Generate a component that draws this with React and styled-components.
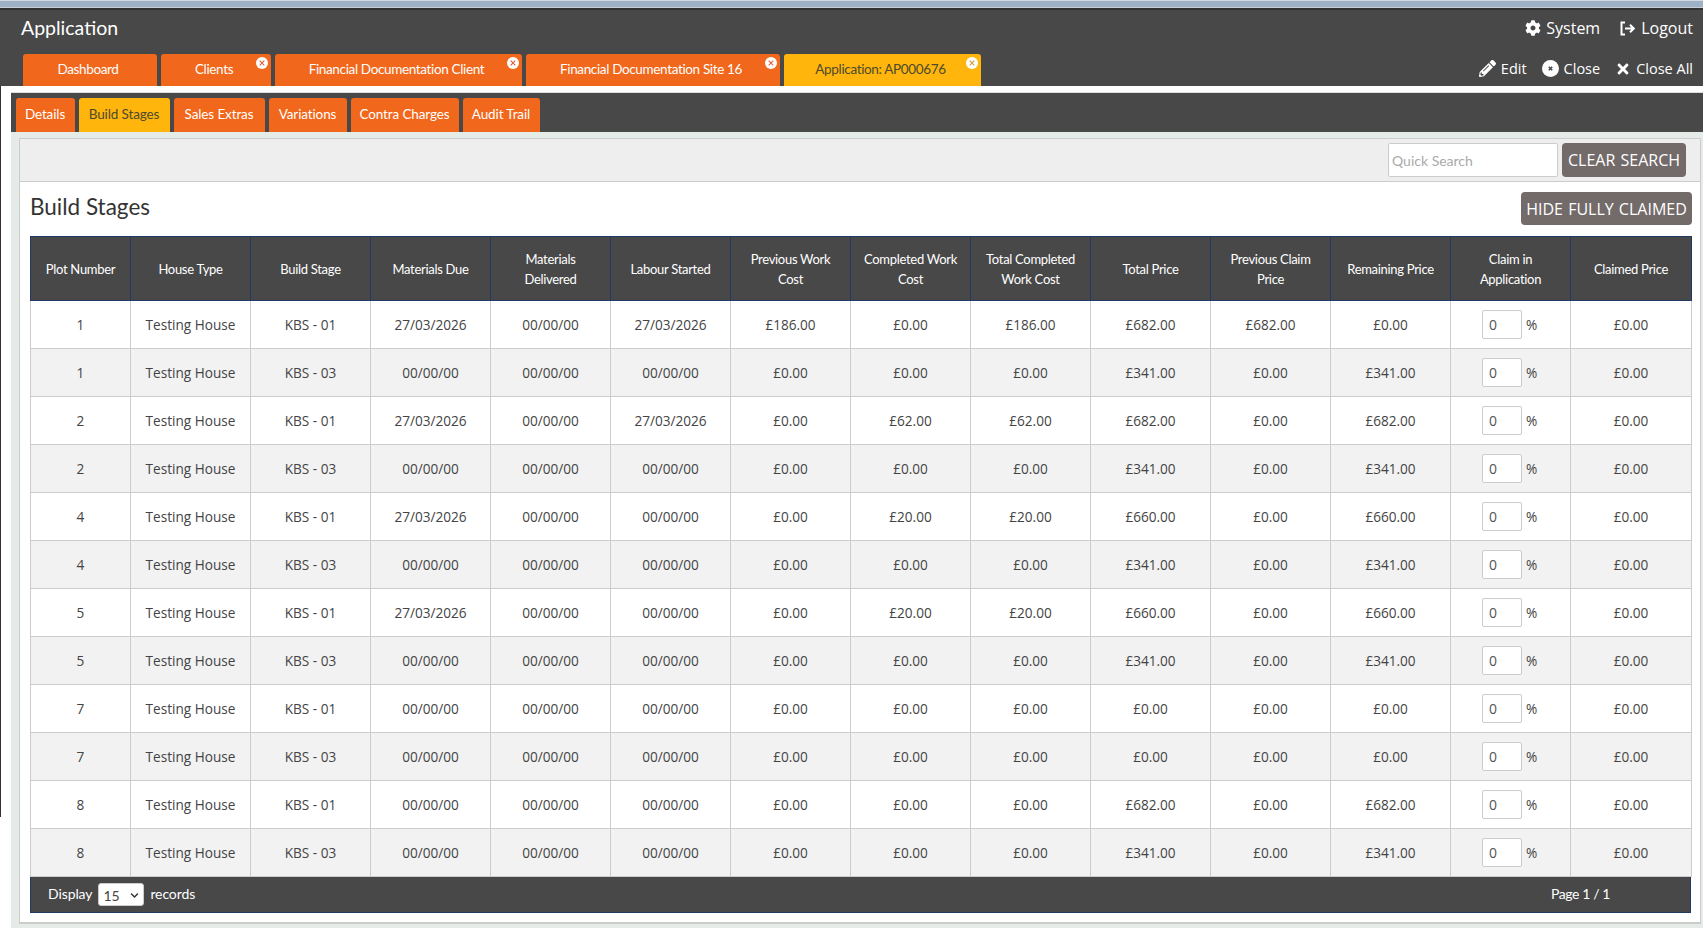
import React from 'react';
import styled, { createGlobalStyle } from 'styled-components';
import { FaCog, FaPencilAlt, FaTimes, FaChevronDown } from 'react-icons/fa';

const GlobalStyle = createGlobalStyle`
  html, body {
    margin: 0;
    padding: 0;
    background: #fff;
    overflow: hidden;
  }
  * {
    box-sizing: border-box;
  }
`;

const headFont = `Lato, "Open Sans", sans-serif`;
const bodyFont = `"Open Sans", "Noto Sans", sans-serif`;

const Page = styled.div`
  width: 1703px;
  height: 928px;
  overflow: hidden;
  background: linear-gradient(#333, #333) left top / 1px 817px no-repeat, #fff;
`;

const TopStrip = styled.div`
  height: 8px;
  background: #9db2c6;
  border-top: 1px solid #d5dade;
  border-bottom: 1px solid #c6ced6;
`;

const Header = styled.header`
  height: 78px;
  background: #484848;
  border-top: 2px solid #333;
  color: #fff;
  font-family: ${headFont};
  display: flex;
  flex-direction: column;
  justify-content: space-between;
`;

const HeaderTop = styled.div`
  display: flex;
  justify-content: space-between;
  align-items: center;
  padding: 6px 10px 0 21px;
`;

const AppTitle = styled.h1`
  margin: 0;
  font-size: 19.5px;
  font-weight: 400;
  line-height: 24px;
`;

const HeaderLinks = styled.div`
  display: flex;
  align-items: center;
  gap: 20px;
  font-family: ${bodyFont};
  font-size: 16px;
`;

const HeaderLink = styled.span`
  display: inline-flex;
  align-items: center;
  gap: 5px;
`;

const HeaderBottom = styled.div`
  display: flex;
  justify-content: space-between;
  align-items: flex-end;
  padding: 0 10px 0 23px;
`;

const MainTabs = styled.div`
  display: flex;
  gap: 4px;
`;

const MainTab = styled.div`
  position: relative;
  width: ${(p) => p.$width}px;
  height: 32px;
  padding: 0 4px 2px 0;
  display: flex;
  align-items: center;
  justify-content: center;
  font-size: 13.5px;
  letter-spacing: -0.35px;
  border-radius: 3px 3px 0 0;
  background: ${(p) => (p.$active ? '#ffb50b' : '#f1671b')};
  color: ${(p) => (p.$active ? '#4d4a2e' : '#fff')};
`;

const TabClose = styled.span`
  position: absolute;
  top: 3px;
  right: 3px;
  width: 12px;
  height: 12px;
  border-radius: 50%;
  background: #fff;
  display: flex;
  align-items: center;
  justify-content: center;
  color: ${(p) => (p.$active ? '#c9a040' : '#e0603a')};
`;

const ActionLinks = styled.div`
  display: flex;
  align-items: center;
  gap: 15px;
  padding-bottom: 8px;
  font-family: ${bodyFont};
  font-size: 14.5px;
`;

const Content = styled.div`
  padding: 6px 0 0 11px;
`;

const SubBar = styled.nav`
  height: 40px;
  background: #484848;
  border-top: 1px solid #ddd;
  display: flex;
  align-items: flex-end;
  gap: 4px;
  padding-left: 5px;
  font-family: ${headFont};
`;

const SubTab = styled.div`
  width: ${(p) => p.$width}px;
  height: 34px;
  padding: 0 1px 2px 0;
  display: flex;
  align-items: center;
  justify-content: center;
  font-size: 13.5px;
  letter-spacing: -0.12px;
  border-radius: 3px 3px 0 0;
  background: ${(p) => (p.$active ? '#ffb50b' : '#f1671b')};
  color: ${(p) => (p.$active ? '#4d4a2e' : '#fff')};
`;

const PanelWrap = styled.div`
  background: #e5ece7;
  padding: 6px 2px 4px 8px;
  height: 796px;
`;

const Panel = styled.section`
  background: #fff;
  border: 1px solid #ccc;
  border-bottom-width: 2px;
  height: 786px;
`;

const Toolbar = styled.div`
  height: 43px;
  background: #eee;
  border-bottom: 1px solid #ccc;
  display: flex;
  justify-content: flex-end;
  align-items: center;
  gap: 4px;
  padding-right: 14px;
`;

const SearchBox = styled.input`
  width: 170px;
  height: 34px;
  border: 1px solid #ccc;
  border-radius: 2px;
  background: #fff;
  padding: 0 3px;
  font-family: ${headFont};
  font-size: 14px;
  &::placeholder {
    color: #aaa;
  }
`;

const GreyButton = styled.button`
  height: ${(p) => p.$height}px;
  width: ${(p) => p.$width}px;
  border: 0;
  border-radius: 4px;
  padding: 0;
  background: #736a6a;
  color: #fff;
  font-family: ${bodyFont};
  font-size: 16px;
  word-spacing: 1px;
`;

const TitleRow = styled.div`
  height: 54px;
  display: flex;
  justify-content: space-between;
  align-items: flex-start;
  padding: 10px 8px 0 10px;
`;

const PageTitle = styled.h2`
  margin: 0;
  padding-top: 1px;
  font-family: ${headFont};
  font-size: 22.5px;
  font-weight: 400;
  line-height: 28px;
  color: #333;
`;

const TableWrap = styled.div`
  padding: 0 8px 0 10px;
`;

const Table = styled.table`
  width: 1661px;
  table-layout: fixed;
  border-collapse: collapse;
  border: 1px solid #1f3a63;
`;

const Th = styled.th`
  height: 64px;
  padding: 0 8px;
  background: #484848;
  border: 1px solid #1f3a63;
  color: #fff;
  font-family: ${headFont};
  font-size: 13px;
  font-weight: 400;
  letter-spacing: -0.3px;
  line-height: 20px;
  text-align: center;
`;

const Td = styled.td`
  height: 48px;
  padding: 0;
  border: 1px solid #ccc;
  color: #444;
  font-family: ${bodyFont};
  font-size: 13.6px;
  text-align: center;
`;

const Row = styled.tr`
  background: ${(p) => (p.$alt ? '#f2f2f2' : '#fff')};
`;

const ClaimCell = styled.div`
  display: flex;
  justify-content: center;
  align-items: center;
  gap: 4px;
  padding-right: 2px;
`;

const ClaimInput = styled.input`
  width: 40px;
  height: 29px;
  border: 1px solid #ccc;
  border-radius: 2px;
  background: #fff;
  padding: 0 6px;
  color: #555;
  font-family: ${bodyFont};
  font-size: 14px;
`;

const Footer = styled.div`
  width: 1661px;
  height: 36px;
  background: #484848;
  border: 1px solid #1f3a63;
  border-top: 0;
  color: #fff;
  font-family: ${headFont};
  font-size: 14px;
  letter-spacing: -0.1px;
  display: flex;
  justify-content: space-between;
  align-items: center;
  padding: 0 80px 3px 17px;
`;

const DisplayGroup = styled.div`
  display: flex;
  align-items: center;
  gap: 6px;
`;

const PageSelect = styled.div`
  position: relative;
  width: 46px;
  height: 23px;
  margin-top: 3px;
  background: #fff;
  border: 1px solid #ccc;
  border-radius: 3px;
  color: #444;
  font-size: 14px;
  padding: 3px 0 0 4px;
  svg {
    position: absolute;
    right: 4px;
    top: 7px;
    color: #333;
  }
`;

const PageInfo = styled.span`
  letter-spacing: -0.4px;
`;

const CloseCircle = () => (
  <svg width="17" height="17" viewBox="0 0 17 17">
    <circle cx="8.5" cy="8.5" r="8.5" fill="#fff" />
    <path d="M6.8 6.8l3.4 3.4M10.2 6.8l-3.4 3.4" stroke="#484848" strokeWidth="1.6" />
  </svg>
);

const SmallX = () => (
  <svg width="6" height="6" viewBox="0 0 6 6">
    <path d="M.7.7l4.6 4.6M5.3.7L.7 5.3" stroke="currentColor" strokeWidth="1.1" />
  </svg>
);

const LogoutIcon = () => (
  <svg width="16" height="15" viewBox="0 0 16 15" fill="none" stroke="#fff" strokeWidth="2">
    <path d="M5 1.5H1.5v12H5" />
    <path d="M5 7.5h8.5M10 3.8l3.8 3.7-3.8 3.7" />
  </svg>
);

const mainTabs = [
  { label: 'Dashboard', width: 134 },
  { label: 'Clients', width: 110, close: true },
  { label: 'Financial  Documentation Client', width: 247, close: true },
  { label: 'Financial  Documentation Site 16', width: 254, close: true },
  { label: 'Application: AP000676', width: 197, close: true, active: true },
];

const subTabs = [
  { label: 'Details', width: 59 },
  { label: 'Build Stages', width: 91, active: true },
  { label: 'Sales Extras', width: 91 },
  { label: 'Variations', width: 78 },
  { label: 'Contra Charges', width: 108 },
  { label: 'Audit Trail', width: 77 },
];

const columns = [
  'Plot Number', 'House Type', 'Build Stage', 'Materials Due', 'Materials Delivered',
  'Labour Started', 'Previous Work Cost', 'Completed Work Cost', 'Total Completed Work Cost',
  'Total Price', 'Previous Claim Price', 'Remaining Price', 'Claim in Application', 'Claimed Price',
];

const D = '27/03/2026';
const N = '00/00/00';
const rows = [
  [1, '01', D, N, D, '186.00', '0.00', '186.00', '682.00', '682.00', '0.00'],
  [1, '03', N, N, N, '0.00', '0.00', '0.00', '341.00', '0.00', '341.00'],
  [2, '01', D, N, D, '0.00', '62.00', '62.00', '682.00', '0.00', '682.00'],
  [2, '03', N, N, N, '0.00', '0.00', '0.00', '341.00', '0.00', '341.00'],
  [4, '01', D, N, N, '0.00', '20.00', '20.00', '660.00', '0.00', '660.00'],
  [4, '03', N, N, N, '0.00', '0.00', '0.00', '341.00', '0.00', '341.00'],
  [5, '01', D, N, N, '0.00', '20.00', '20.00', '660.00', '0.00', '660.00'],
  [5, '03', N, N, N, '0.00', '0.00', '0.00', '341.00', '0.00', '341.00'],
  [7, '01', N, N, N, '0.00', '0.00', '0.00', '0.00', '0.00', '0.00'],
  [7, '03', N, N, N, '0.00', '0.00', '0.00', '0.00', '0.00', '0.00'],
  [8, '01', N, N, N, '0.00', '0.00', '0.00', '682.00', '0.00', '682.00'],
  [8, '03', N, N, N, '0.00', '0.00', '0.00', '341.00', '0.00', '341.00'],
];

const App = () => {
  return (
    <Page>
      <GlobalStyle />
      <TopStrip />
      <Header>
        <HeaderTop>
          <AppTitle>Application</AppTitle>
          <HeaderLinks>
            <HeaderLink><FaCog size={16} />System</HeaderLink>
            <HeaderLink><LogoutIcon />Logout</HeaderLink>
          </HeaderLinks>
        </HeaderTop>
        <HeaderBottom>
          <MainTabs>
            {mainTabs.map((tab) => (
              <MainTab key={tab.label} $width={tab.width} $active={tab.active}>
                {tab.label}
                {tab.close && <TabClose $active={tab.active}><SmallX /></TabClose>}
              </MainTab>
            ))}
          </MainTabs>
          <ActionLinks>
            <HeaderLink><FaPencilAlt size={17} />Edit</HeaderLink>
            <HeaderLink><CloseCircle />Close</HeaderLink>
            <HeaderLink><FaTimes size={16} />Close All</HeaderLink>
          </ActionLinks>
        </HeaderBottom>
      </Header>
      <Content>
        <SubBar>
          {subTabs.map((tab) => (
            <SubTab key={tab.label} $width={tab.width} $active={tab.active}>{tab.label}</SubTab>
          ))}
        </SubBar>
        <PanelWrap>
          <Panel>
            <Toolbar>
              <SearchBox placeholder="Quick Search" />
              <GreyButton $width={124} $height={34}>CLEAR SEARCH</GreyButton>
            </Toolbar>
            <TitleRow>
              <PageTitle>Build Stages</PageTitle>
              <GreyButton $width={171} $height={33}>HIDE FULLY CLAIMED</GreyButton>
            </TitleRow>
            <TableWrap>
              <Table>
                <colgroup>
                  <col style={{ width: 100 }} />
                  {columns.slice(1, -1).map((c) => <col key={c} style={{ width: 120 }} />)}
                  <col style={{ width: 121 }} />
                </colgroup>
                <thead>
                  <tr>{columns.map((c) => <Th key={c}>{c}</Th>)}</tr>
                </thead>
                <tbody>
                  {rows.map((r, i) => (
                    <Row key={i} $alt={i % 2 === 1}>
                      <Td>{r[0]}</Td>
                      <Td>Testing House</Td>
                      <Td>KBS - {r[1]}</Td>
                      <Td>{r[2]}</Td>
                      <Td>{r[3]}</Td>
                      <Td>{r[4]}</Td>
                      {r.slice(5).map((v, j) => <Td key={j}>£{v}</Td>)}
                      <Td>
                        <ClaimCell>
                          <ClaimInput defaultValue="0" />%
                        </ClaimCell>
                      </Td>
                      <Td>£0.00</Td>
                    </Row>
                  ))}
                </tbody>
              </Table>
              <Footer>
                <DisplayGroup>
                  Display
                  <PageSelect>15<FaChevronDown size={9} /></PageSelect>
                  records
                </DisplayGroup>
                <PageInfo>Page 1 / 1</PageInfo>
              </Footer>
            </TableWrap>
          </Panel>
        </PanelWrap>
      </Content>
    </Page>
  );
};

export default App;
